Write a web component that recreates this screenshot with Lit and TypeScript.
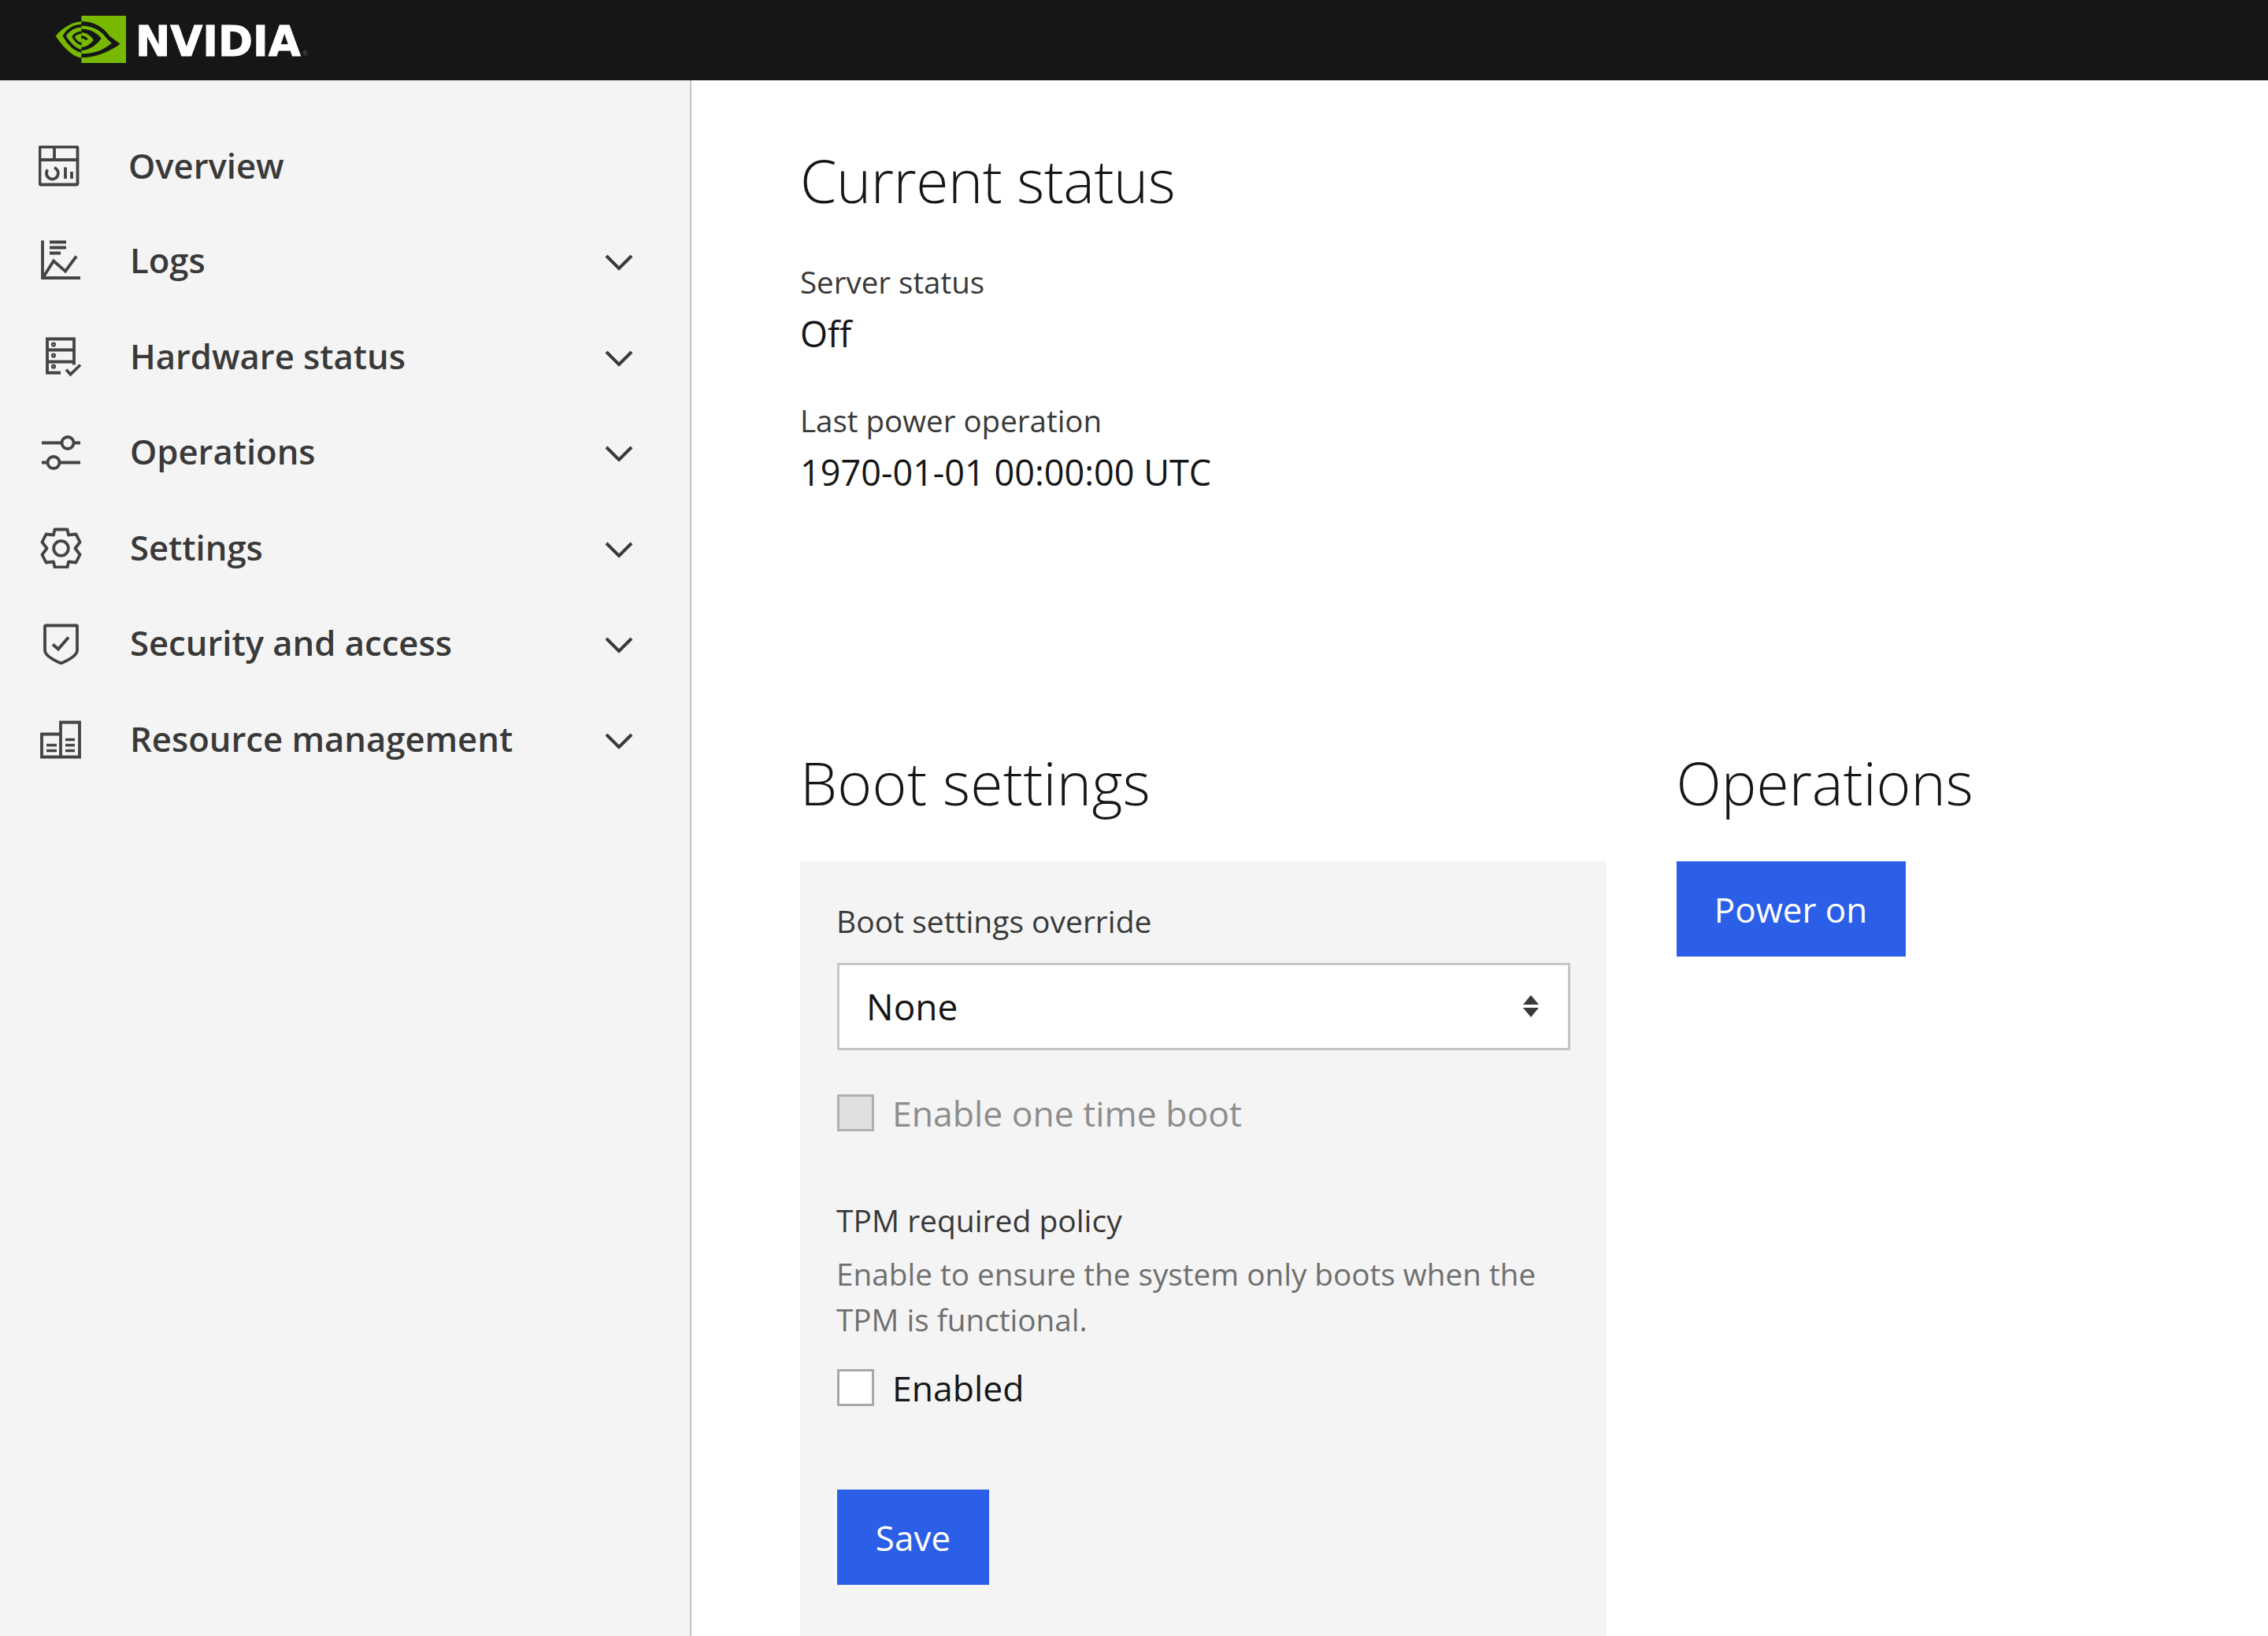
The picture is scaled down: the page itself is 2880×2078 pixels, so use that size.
import { LitElement, html, css, svg } from 'lit';
import { customElement } from 'lit/decorators.js';

const navItems = [
  { label: 'Overview', icon: 'overview', chevron: false },
  { label: 'Logs', icon: 'logs', chevron: true },
  { label: 'Hardware status', icon: 'hardware', chevron: true },
  { label: 'Operations', icon: 'operations', chevron: true },
  { label: 'Settings', icon: 'settings', chevron: true },
  { label: 'Security and access', icon: 'security', chevron: true },
  { label: 'Resource management', icon: 'resource', chevron: true },
];

const icons: Record<string, unknown> = {
  overview: svg`<rect x="1.500" y="1.500" width="48" height="48" rx="1.500"/><path d="M1.500 18h48M20 1.500V18M34 27.500V42M42 33v9"/><path d="M20 28a7.500 7.500 0 1 1-8.500 2.500"/>`,
  logs: svg`<path d="M3 .5V48h48M4 47l13-20.500 15 13 14-19M12 2.500h21M12 9.500h21M12 16.500h14"/>`,
  hardware: svg`<path d="M26 47.500H9V4.500h34v33M9 18.500h34M9 33.500h34"/><circle cx="17" cy="11.500" r="1.200"/><circle cx="17" cy="25.500" r="1.200"/><circle cx="17" cy="39.500" r="1.200"/><path d="M33 43.500l5.500 6 12.500-12"/>`,
  operations: svg`<path d="M2 14.500h25.500M42.500 14.500H51M2 39.500h7.500M24.500 39.500H51"/><circle cx="35" cy="14.500" r="7.500"/><circle cx="17" cy="39.500" r="7.500"/>`,
  settings: svg`<circle cx="26.500" cy="27.500" r="9.300"/><path d="M18.500 3.500h16l1.500 7 9.500-1 5 10-6 8 6 8-5 10-9.500-1-1.500 7h-16l-1.500-7-9.500 1-5-10 6-8-6-8 5-10 9.500 1z" stroke-linejoin="round"/>`,
  security: svg`<path d="M7 3.500h39a1 1 0 0 1 1 1V35c0 6-10 12-20.500 16.500C16 47 6 41 6 35V4.500a1 1 0 0 1 1-1z"/><path d="M16 27.500l7 6 13-15" stroke-width="4"/>`,
  resource: svg`<path d="M26 20.500H2v29h48v-44H26v44"/><path d="M8 34.500h13M8 41.500h13M32 27.500h12M32 34.500h12M32 41.500h12" stroke-width="3.500"/>`,
};

@customElement('app-root')
export class AppRoot extends LitElement {

  static styles = css`
    :host{
      display:block;
      height:2078px;
      overflow:hidden;
      background:#fff;
      font-family:"Open Sans","Noto Sans",sans-serif;
      color:#161616;
    }
    header{
      height:102px;
      background:#161616;
      display:flex;
      align-items:center;
      padding-left:70px;
      box-sizing:border-box
    }
    .logo-mark{
      width:90px;
      height:60px;
      display:block;
      margin-top:-2px
    }
    .wordmark{
      margin:18px 0 0 12px;
      font-family:"DejaVu Sans",sans-serif;
      font-weight:700;
      font-size:53px;
      line-height:54px;
      color:#fff;
      -webkit-text-stroke:1px #fff
    }
    .wordmark small{
      font-size:9px;
      font-weight:400;
      color:#555;
      margin-left:1px;
      -webkit-text-stroke:0
    }
    .body{
      display:flex;
      height:1976px
    }
    nav{
      width:878px;
      flex:none;
      box-sizing:border-box;
      background:#f4f4f4;
      border-right:2px solid #c6c6c6;
      padding-top:49px
    }
    .nav-item{
      height:121.500px;
      display:flex;
      align-items:center;
      color:#393939;
      font-size:43.600px;
      font-weight:600;
      padding-left:51px
    }
    .nav-item.overview{
      padding-left:49px
    }
    .nav-item svg.icon{
      width:53px;
      height:53px;
      flex:none;
      margin:-4px 61px 0 0;
      fill:none;
      stroke:#444;
      stroke-width:3.800
    }
    .nav-item.overview svg.icon{
      margin-top:0
    }
    .nav-item span{
      flex:1;
      margin-top:-6px
    }
    .nav-item.overview span{
      margin-top:-3px
    }
    .chevron{
      width:36px;
      height:22px;
      margin-right:72px;
      fill:none;
      stroke:#393939;
      stroke-width:4
    }
    main{
      flex:1;
      padding:77px 0 0 138px
    }
    h1{
      margin:0;
      font-weight:300;
      font-size:75px;
      line-height:100px;
      color:#161616
    }
    h1.current{
      letter-spacing:-0.500px
    }
    h1.boot-title{
      letter-spacing:0.300px
    }
    .stat{
      margin-top:52px
    }
    .stat + .stat{
      margin-top:50px
    }
    .stat-label{
      font-size:38.500px;
      line-height:54px;
      color:#393939
    }
    .stat-value{
      font-size:45px;
      line-height:66px;
      color:#161616;
      margin-top:6px
    }
    .columns{
      display:flex;
      gap:88.500px;
      margin-top:311px
    }
    .boot{
      width:1024px
    }
    .card{
      margin-top:50px;
      background:#f4f4f4;
      padding:45px 46px 120px 47px;
      height:1000px;
      box-sizing:border-box
    }
    .field-label{
      font-size:39px;
      line-height:62px;
      color:#393939;
      margin-left:-1px
    }
    .select{
      margin-top:22px;
      height:111px;
      box-sizing:border-box;
      border:3px solid #c6c6c6;
      background:#fff;
      display:flex;
      align-items:center;
      justify-content:space-between;
      padding:0 35px 2px 34px;
      font-size:46px;
      color:#161616
    }
    .sort{
      width:24px;
      height:30px;
      fill:#393939
    }
    .check{
      display:flex;
      align-items:center;
      gap:23px;
      font-size:44.500px;
      color:#161616
    }
    .box{
      width:47px;
      height:47px;
      box-sizing:border-box;
      border:3px solid #a8a8a8;
      background:#fff;
      flex:none
    }
    .check.disabled{
      margin-top:49px;
      color:#8d8d8d
    }
    .check.disabled .box{
      background:#e0e0e0;
      border-color:#b0b0b0
    }
    .tpm{
      margin-top:75px;
      font-size:39px;
      line-height:62px;
      color:#393939;
      margin-left:-1px
    }
    .desc{
      font-size:38.700px;
      line-height:58px;
      color:#6f6f6f;
      margin-top:8px;
      margin-left:-1px
    }
    .tpm-check{
      margin-top:27px
    }
    .btn{
      display:flex;
      align-items:center;
      justify-content:center;
      height:121px;
      box-sizing:border-box;
      background:#2b5fe8;
      color:#fff;
      font-size:44px
    }
    .save{
      width:193px;
      margin-top:99px
    }
    .power{
      width:291px;
      margin-top:50px
    }
  `;

  render() {
    return html`
      <header>
        ${this.logo()}
        <div class="wordmark">NVIDIA<small>®</small></div>
      </header>
      <div class="body">
        <nav>
          ${navItems.map(item => html`
            <div class="nav-item ${item.icon}">
              <svg class="icon" viewBox="0 0 53 53">${icons[item.icon]}</svg>
              <span>${item.label}</span>
              ${item.chevron ? html`<svg class="chevron" viewBox="0 0 36 22"><path d="M2 3l16 16L34 3"/></svg>` : ''}
            </div>
          `)}
        </nav>
        <main>
          <h1 class="current">Current status</h1>
          <div class="stat">
            <div class="stat-label">Server status</div>
            <div class="stat-value">Off</div>
          </div>
          <div class="stat">
            <div class="stat-label">Last power operation</div>
            <div class="stat-value">1970-01-01 00:00:00 UTC</div>
          </div>
          <div class="columns">
            <section class="boot">
              <h1 class="boot-title">Boot settings</h1>
              <div class="card">
                <div class="field-label">Boot settings override</div>
                <div class="select">
                  <span>None</span>
                  <svg class="sort" viewBox="0 0 24 30"><path d="M12 1l10 12H2zM2 17h20L12 29z"/></svg>
                </div>
                <div class="check disabled"><div class="box"></div>Enable one time boot</div>
                <div class="tpm">TPM required policy</div>
                <div class="desc">Enable to ensure the system only boots when the TPM is functional.</div>
                <div class="check tpm-check"><div class="box"></div>Enabled</div>
                <div class="btn save">Save</div>
              </div>
            </section>
            <section>
              <h1>Operations</h1>
              <div class="btn power">Power on</div>
            </section>
          </div>
        </main>
      </div>
    `;
  }

  logo(){
    return html`<svg class="logo-mark" viewBox="30 20 270 180">
      <path d="M130 20H300V200H130z" fill="#76b900"/>
      <path d="M130 42C90 45 55 70 32 97C55 130 90 175 130 180z" fill="#76b900"/>
      <path d="M130 58C100 60 78 75 65 97C80 125 105 150 130 155" fill="none" stroke="#161616" stroke-width="11"/>
      <path d="M130 84C115 85 105 92 99 100C105 112 118 125 130 128" fill="none" stroke="#161616" stroke-width="9"/>
      <path d="M130 42C180 42 215 65 238 98L278 127C240 155 190 178 130 180V165C180 165 215 150 245 125L225 105C205 75 170 58 130 58z" fill="#161616"/>
      <path d="M130 70C165 70 190 85 206 106C190 130 160 152 130 152V140C150 138 165 128 176 112C165 95 148 84 130 84z" fill="#161616"/>
      <path d="M130 96C140 96 150 102 156 110L145 113C142 107 137 106 130 106z" fill="#161616"/>
    </svg>`;
  }

}
